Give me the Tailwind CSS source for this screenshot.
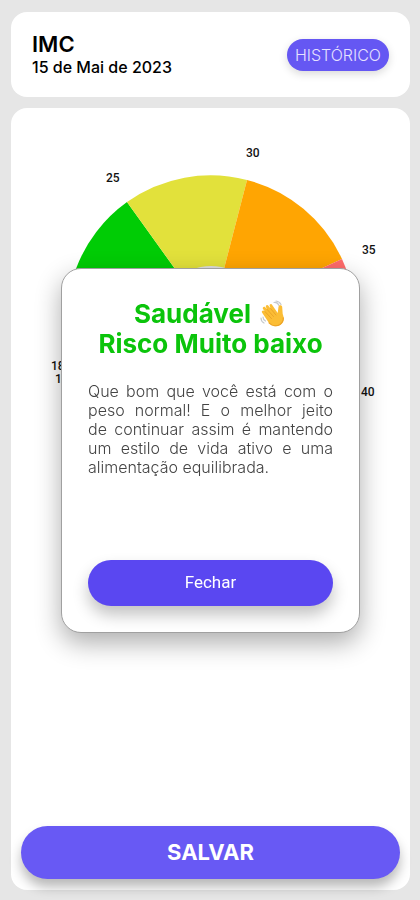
<!DOCTYPE html>
<html lang="pt-BR">
<head>
  <meta charset="UTF-8" />
  <meta name="viewport" content="width=device-width, initial-scale=1.0" />
  <title>IMC</title>
  <script src="https://cdn.jsdelivr.net/npm/@tailwindcss/browser@4"></script>
</head>

<body class="bg-[#e6e6e6] text-black font-['Inter',sans-serif]">

  <div class="min-h-screen flex flex-col gap-[11px] pl-[11px] pr-[10px] pt-3 pb-[10px]">

    <!-- Header -->
    <header class="bg-white rounded-2xl flex items-center justify-between px-[21px] py-5">
      <div>
        <h1 class="text-[22px] leading-[25px] font-semibold">IMC</h1>
        <p class="text-[16px] leading-5 font-medium">15 de Mai de 2023</p>
      </div>
      <button type="button" onclick="openResult()" class="h-8 px-2 rounded-full bg-[#6557f3] text-[#e5e1ff] text-[16px] font-light shadow-[0_3px_8px_rgba(0,0,0,0.15)]">HISTÓRICO</button>
    </header>

    <!-- Gauge + save -->
    <main class="grow bg-white rounded-2xl flex flex-col justify-between">
      <svg viewBox="0 0 399 380" class="w-full" role="img" aria-label="Escala do IMC">
        <path d="M200 211 L76 284 A144 144 0 0 1 60 178 Z" fill="#00b7eb" />
        <path d="M200 211 L60 245 A144 144 0 0 1 116 94 Z" fill="#00cc05" />
        <path d="M200 211 L116 94 A144 144 0 0 1 236 72 Z" fill="#e2e13b" />
        <path d="M200 211 L236 72 A144 144 0 0 1 331 151 Z" fill="#ffa502" />
        <path d="M200 211 L331 151 A144 144 0 0 1 324 284 Z" fill="#ff6b6b" />
        <circle cx="200" cy="211" r="53" fill="#dedede" />
        <g class="font-['Roboto',sans-serif] text-[12px] font-medium" fill="#111">
          <text x="40" y="262">18.5</text>
          <text x="44" y="275">17</text>
          <text x="95" y="74">25</text>
          <text x="235" y="49">30</text>
          <text x="351" y="146">35</text>
          <text x="350" y="288">40</text>
        </g>
      </svg>
      <div class="p-[10px] pb-[11px]">
        <button type="button" class="w-full h-[53px] rounded-full bg-[#6859f4] text-white text-[22px] font-bold shadow-[0_8px_12px_rgba(0,0,0,0.28)]">SALVAR</button>
      </div>
    </main>
  </div>

  <!-- Result dialog -->
  <div id="result" class="fixed inset-0 flex items-center justify-center pl-[61px] pr-[60px]">
    <section role="dialog" aria-labelledby="resultTitle" class="w-full max-w-[400px] bg-white border border-[#a0a0a0] rounded-[20px] px-[26px] pt-[30px] pb-[26px] shadow-[0_10px_26px_rgba(0,0,0,0.32)]">
      <h2 id="resultTitle" class="text-center text-[#0bc40b] text-[26px] leading-[30px] font-bold whitespace-nowrap">
        <span class="flex items-center justify-center gap-2">
          Saudável
          <svg viewBox="0 0 28 28" class="w-7 h-7" aria-hidden="true">
            <path d="M15 2.500q3.500-.5 5 3M17 1q3.500.5 5 3.500M2 18q0 3.500 3 5M4 17q0 2.500 2.500 4" fill="none" stroke="#c5c9cc" stroke-width="1.200" stroke-linecap="round" />
            <path d="M3 12.500c-.8-1.200.8-2.700 2-1.700l1 .8-2-2.600c-1-1.500 1-3 2.200-1.700L8 9.300 7 7.200c-.8-1.700 1.400-2.900 2.400-1.400l2.100 2.700-.8-2.600c-.6-1.700 1.700-2.500 2.500-1L18.700 13l.8-6.200c.2-2.300 3.700-2 3.700.3l.5 6.800c1.800 4.600 1.300 8.600-2.600 11-4.600 2.700-8.900.9-11.600-2.600z" fill="#fbbd35" />
            <path d="M6 11.600l6.500 7M8 9.300l6.500 7.200M11.500 8.500l5.500 6.500" fill="none" stroke="#e29a22" stroke-width=".7" stroke-linecap="round" />
            <path d="M10 22.800c3 3 7.500 4 11 1.600 2.600-1.700 3.400-4 3.300-6.600" fill="none" stroke="#eca326" stroke-width="1.200" stroke-linecap="round" />
          </svg>
        </span>
        Risco Muito baixo
      </h2>
      <p class="mt-[23px] text-[16px] leading-[19px] font-light text-[#444] text-justify">
        Que bom que você está com o peso normal! E o melhor jeito de&nbsp;continuar assim é mantendo um&nbsp;estilo de vida ativo e uma alimentação equilibrada.
      </p>
      <button type="button" onclick="closeResult()" class="mt-[83px] w-full h-[46px] rounded-full bg-[#5a47f1] text-white text-[17px] font-['Roboto',sans-serif] shadow-[0_9px_16px_rgba(0,0,0,0.24)]">Fechar</button>
    </section>
  </div>

  <script>
    function openResult() {
      document.getElementById('result').classList.remove('hidden');
    }

    function closeResult() {
      document.getElementById('result').classList.add('hidden');
    }
  </script>
</body>
</html>
